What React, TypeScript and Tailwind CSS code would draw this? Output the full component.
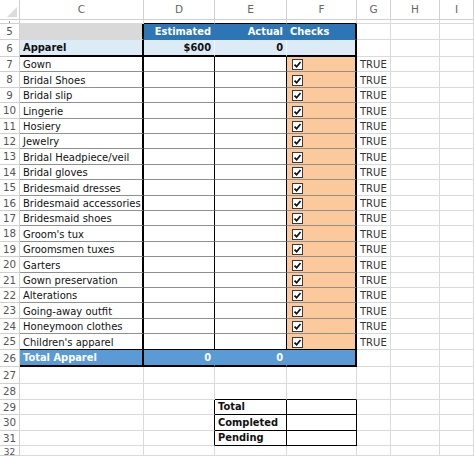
import type { ReactNode } from "react";

const items = [
  "Gown",
  "Bridal Shoes",
  "Bridal slip",
  "Lingerie",
  "Hosiery",
  "Jewelry",
  "Bridal Headpiece/veil",
  "Bridal gloves",
  "Bridesmaid dresses",
  "Bridesmaid accessories",
  "Bridesmaid shoes",
  "Groom's tux",
  "Groomsmen tuxes",
  "Garters",
  "Gown preservation",
  "Alterations",
  "Going-away outfit",
  "Honeymoon clothes",
  "Children's apparel",
];

// 19 rows share 293px -> mix of 15 and 16
const itemHeights = [
  "h-[15px]", "h-[16px]", "h-[15px]", "h-[16px]", "h-[15px]", "h-[15px]", "h-[16px]",
  "h-[15px]", "h-[16px]", "h-[15px]", "h-[15px]", "h-[16px]", "h-[15px]", "h-[16px]",
  "h-[15px]", "h-[15px]", "h-[16px]", "h-[15px]", "h-[16px]",
];

type CellProps = {
  r?: string;
  b?: string;
  className?: string;
  children?: ReactNode;
};

// excel-like cell: right + bottom border, gridline colour by default
const Cell = ({
  r = "border-r border-r-[#dadada]",
  b = "border-b border-b-[#dadada]",
  className = "",
  children,
}: CellProps) => (
  <div
    className={`flex items-center overflow-hidden whitespace-nowrap px-[3px] pt-[1px] ${r} ${b} ${className}`}
  >
    {children}
  </div>
);

const Row = ({
  num,
  h,
  children,
}: {
  num?: ReactNode;
  h: string;
  children?: ReactNode;
}) => (
  <div
    className={`grid grid-cols-[20px_124px_71px_72px_70px_34px_49px_34px] ${h}`}
  >
    <div className="flex items-center justify-center overflow-hidden border-r border-b border-[#d0d0d0] pt-[1px] text-[10.3px] text-[#555]">
      {num}
    </div>
    {children}
  </div>
);

const CheckBox = () => (
  <span className="ml-[2px] flex h-[11px] w-[11px] items-center justify-center border border-[#3a3a3a] bg-white">
    <svg width="9" height="9" viewBox="0 0 9 9">
      <path
        d="M1.5 4.6 L3.6 6.7 L7.5 2"
        fill="none"
        stroke="#111"
        strokeWidth="1.7"
      />
    </svg>
  </span>
);

const Blank = () => (
  <>
    <Cell />
    <Cell />
    <Cell />
  </>
);

const App = () => {
  return (
    <div className="h-[456px] w-[474px] overflow-hidden bg-white font-['DejaVu_Sans',sans-serif] text-[10px] text-[#111]">
      {/* column letters */}
      <div className="grid h-[20px] grid-cols-[20px_124px_71px_72px_70px_34px_49px_34px] text-[10.5px] text-[#666]">
        <div className="border-r border-b border-[#d0d0d0]">
          <svg width="19" height="19" viewBox="0 0 19 19">
            <polygon points="17,7 17,17 7,17" fill="#dcdcdc" />
          </svg>
        </div>
        {["C", "D", "E", "F", "G", "H", "I"].map((l) => (
          <div
            key={l}
            className="flex items-center justify-center border-r border-b border-[#d0d0d0]"
          >
            {l}
          </div>
        ))}
      </div>

      {/* hidden row 4 sliver */}
      <Row
        h="h-[4px]"
        num={<span className="mt-[-1px] block h-[2px] w-[1px] bg-[#999]" />}
      >
        <Cell />
        <Cell b="border-b border-b-black" />
        <Cell b="border-b border-b-black" />
        <Cell b="border-b border-b-black" />
        <Blank />
      </Row>

      {/* header row */}
      <Row num="5" h="h-[16px]">
        <Cell r="border-r-2 border-r-black" className="bg-[#d9d9d9]" />
        <Cell
          r="border-r border-r-[#2e75b6]"
          b="border-b border-b-[#2e75b6]"
          className="justify-end bg-[#2e75b6] text-[9.9px] font-bold text-white"
        >
          Estimated
        </Cell>
        <Cell
          r="border-r border-r-[#2e75b6]"
          b="border-b border-b-[#2e75b6]"
          className="justify-end bg-[#2e75b6] text-[9.9px] font-bold text-white"
        >
          Actual
        </Cell>
        <Cell
          r="border-r-2 border-r-black"
          b="border-b border-b-[#2e75b6]"
          className="bg-[#2e75b6] text-[9.9px] font-bold text-white"
        >
          Checks
        </Cell>
        <Blank />
      </Row>

      {/* category row */}
      <Row num="6" h="h-[17px]">
        <Cell
          r="border-r-2 border-r-black"
          b="border-b-2 border-b-black"
          className="bg-[#ddebf7] text-[9.9px] font-bold"
        >
          Apparel
        </Cell>
        <Cell
          r="border-r border-r-[#f2f7fc]"
          b="border-b-2 border-b-black"
          className="justify-end bg-[#ddebf7] text-[9.9px] font-bold"
        >
          $600
        </Cell>
        <Cell
          r="border-r border-r-[#f2f7fc]"
          b="border-b-2 border-b-black"
          className="justify-end bg-[#ddebf7] text-[9.9px] font-bold"
        >
          0
        </Cell>
        <Cell
          r="border-r-2 border-r-black"
          b="border-b-2 border-b-black"
          className="bg-[#ddebf7]"
        />
        <Blank />
      </Row>

      {items.map((item, i) => {
        const last = i === items.length - 1;
        const b = last ? "border-b border-b-black" : "border-b border-b-[#8f8f8f]";
        return (
          <Row key={item} num={i + 7} h={itemHeights[i]}>
            <Cell r="border-r-2 border-r-black" b={b}>
              {item}
            </Cell>
            <Cell r="border-r border-r-black" b={b} />
            <Cell r="border-r border-r-black" b={b} />
            <Cell r="border-r-2 border-r-black" b={b} className="bg-[#fbc99b]">
              <CheckBox />
            </Cell>
            <Cell className="text-[#333]">TRUE</Cell>
            <Cell />
            <Cell />
          </Row>
        );
      })}

      {/* total row */}
      <Row num="26" h="h-[17px]">
        <Cell
          r="border-r-2 border-r-black"
          b="border-b-2 border-b-black"
          className="bg-[#5b9bd5] text-[9.9px] font-bold text-white"
        >
          Total Apparel
        </Cell>
        <Cell
          r="border-r border-r-[#5b9bd5]"
          b="border-b-2 border-b-black"
          className="justify-end bg-[#5b9bd5] text-[9.9px] font-bold text-white"
        >
          0
        </Cell>
        <Cell
          r="border-r border-r-[#5b9bd5]"
          b="border-b-2 border-b-black"
          className="justify-end bg-[#5b9bd5] text-[9.9px] font-bold text-white"
        >
          0
        </Cell>
        <Cell
          r="border-r-2 border-r-black"
          b="border-b-2 border-b-black"
          className="bg-[#5b9bd5]"
        />
        <Blank />
      </Row>

      <Row num="27" h="h-[17px]">
        <Cell />
        <Cell />
        <Cell />
        <Cell />
        <Blank />
      </Row>

      <Row num="28" h="h-[16px]">
        <Cell />
        <Cell />
        <Cell b="border-b border-b-black" />
        <Cell b="border-b border-b-black" />
        <Blank />
      </Row>

      {[
        ["29", "Total", "h-[15px]"],
        ["30", "Completed", "h-[16px]"],
        ["31", "Pending", "h-[15px]"],
      ].map(([n, label, h]) => (
        <Row key={n} num={n} h={h}>
          <Cell />
          <Cell r="border-r border-r-black" />
          <Cell
            r="border-r border-r-black"
            b="border-b border-b-black"
            className="text-[9.9px] font-bold"
          >
            {label}
          </Cell>
          <Cell r="border-r border-r-black" b="border-b border-b-black" />
          <Blank />
        </Row>
      ))}

      <Row
        num={<span className="mt-[3px] text-[9px] leading-none">32</span>}
        h="h-[10px]"
      >
        <Cell />
        <Cell />
        <Cell />
        <Cell />
        <Blank />
      </Row>
    </div>
  );
};

export default App;
